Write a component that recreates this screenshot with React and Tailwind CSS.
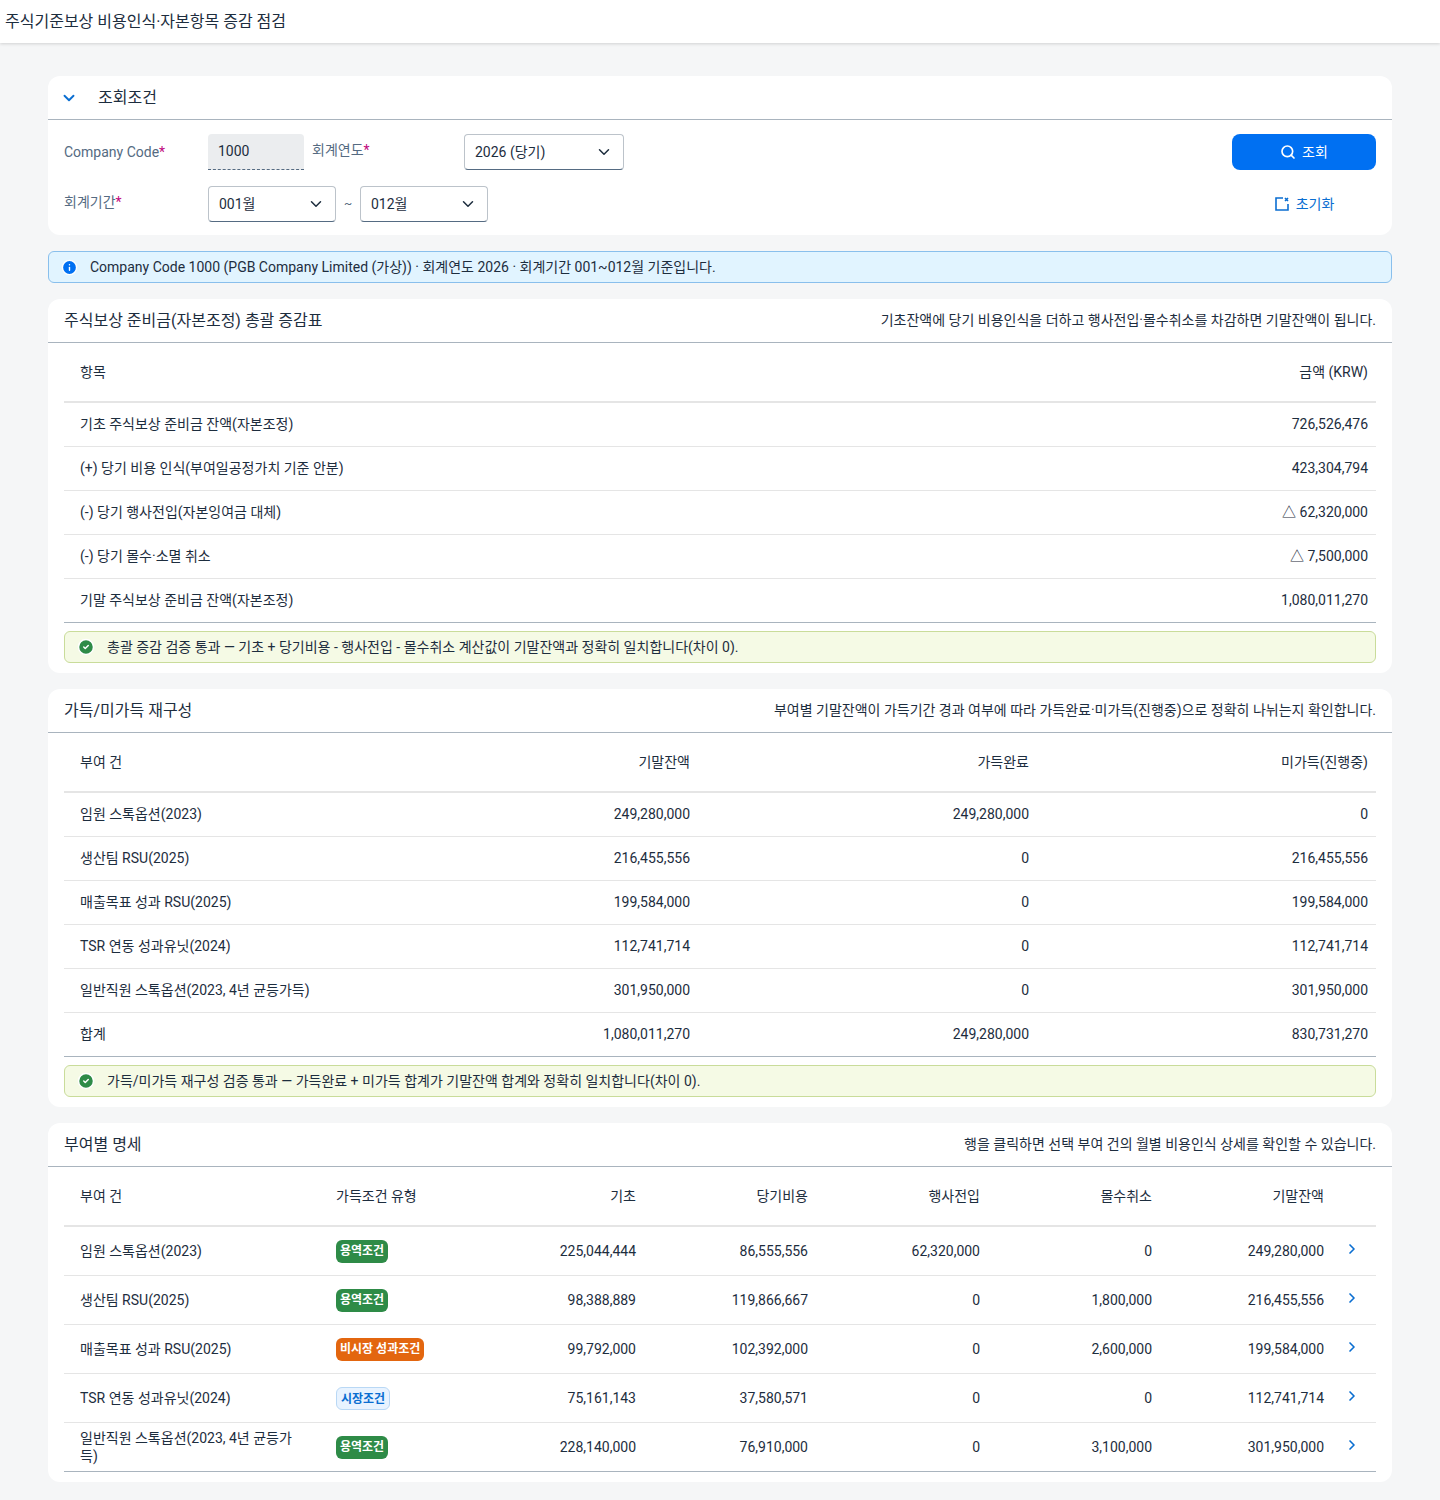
import React from "react";
import { ChevronDown, ChevronRight, Search, Info, CheckCircle2 } from "lucide-react";

const font = { fontFamily: 'Roboto, "Noto Sans CJK KR", sans-serif' };

const summary = [
  ["기초 주식보상 준비금 잔액(자본조정)", "726,526,476"],
  ["(+) 당기 비용 인식(부여일공정가치 기준 안분)", "423,304,794"],
  ["(-) 당기 행사전입(자본잉여금 대체)", "△ 62,320,000"],
  ["(-) 당기 몰수·소멸 취소", "△ 7,500,000"],
  ["기말 주식보상 준비금 잔액(자본조정)", "1,080,011,270"],
];

const vest = [
  ["임원 스톡옵션(2023)", "249,280,000", "249,280,000", "0"],
  ["생산팀 RSU(2025)", "216,455,556", "0", "216,455,556"],
  ["매출목표 성과 RSU(2025)", "199,584,000", "0", "199,584,000"],
  ["TSR 연동 성과유닛(2024)", "112,741,714", "0", "112,741,714"],
  ["일반직원 스톡옵션(2023, 4년 균등가득)", "301,950,000", "0", "301,950,000"],
  ["합계", "1,080,011,270", "249,280,000", "830,731,270"],
];

const grants = [
  ["임원 스톡옵션(2023)", "용역조건", "green", "225,044,444", "86,555,556", "62,320,000", "0", "249,280,000"],
  ["생산팀 RSU(2025)", "용역조건", "green", "98,388,889", "119,866,667", "0", "1,800,000", "216,455,556"],
  ["매출목표 성과 RSU(2025)", "비시장 성과조건", "orange", "99,792,000", "102,392,000", "0", "2,600,000", "199,584,000"],
  ["TSR 연동 성과유닛(2024)", "시장조건", "blue", "75,161,143", "37,580,571", "0", "0", "112,741,714"],
  ["일반직원 스톡옵션(2023, 4년 균등가득)", "용역조건", "green", "228,140,000", "76,910,000", "0", "3,100,000", "301,950,000"],
];

const badge = {
  green: "bg-[#2e8b47] text-white",
  orange: "bg-[#e3660f] text-white",
  blue: "bg-[#e8f3ff] text-[#0a6ed1] border border-[#b9d8f5]",
};

function CardHead({ title, note }) {
  return (
    <div className="flex items-center justify-between h-11 px-4 border-b border-[#a9b4be]">
      <span className="text-[16px] text-[#1d2d3e]">{title}</span>
      <span className="text-[14px] text-[#1d2d3e]">{note}</span>
    </div>
  );
}

function Passed({ children }) {
  return (
    <div className="mx-4 mt-2 h-8 flex items-center gap-3 px-3 rounded-md border border-[#c9dc9a] bg-[#f5fae5] text-[14px] text-[#1d2d3e]">
      <CheckCircle2 size={18} className="text-white fill-[#2e8b47]" />
      {children}
    </div>
  );
}

function Select({ value, w }) {
  return (
    <div className={`${w} h-9 flex items-center justify-between px-2.5 bg-white border border-[#bcc3ca] border-b-[#556b82] rounded text-[14px] text-[#1d2d3e]`}>
      {value}
      <ChevronDown size={18} strokeWidth={2} />
    </div>
  );
}

export default function App() {
  return (
    <div style={font} className="min-h-[1500px] bg-[#f5f6f7] text-[#1d2d3e]">
      <div className="h-[43px] bg-white shadow-[0_1px_3px_rgba(0,0,0,0.15)] flex items-center px-[5px] text-[16px]">
        주식기준보상 비용인식·자본항목 증감 점검
      </div>

      <div className="px-12 pt-[33px] pb-4 flex flex-col gap-4">
        <div className="bg-white rounded-xl">
          <div className="h-11 flex items-center gap-5 px-3 border-b border-[#a9b4be]">
            <ChevronDown size={18} className="text-[#0a6ed1]" strokeWidth={2.5} />
            <span className="text-[16px]">조회조건</span>
          </div>
          <div className="flex justify-between px-4 pt-[14px] pb-[13px]">
            <div className="flex flex-col gap-4">
              <div className="flex">
                <span className="w-[144px] pt-2 text-[14px] text-[#556b82]">Company Code<span className="text-[#c0087d]">*</span></span>
                <div className="w-[96px] h-9 flex items-center px-2.5 bg-[#ebedef] border-b border-dashed border-[#556b82] rounded-t text-[14px]">1000</div>
                <span className="w-[160px] pl-2 pt-1.5 text-[14px] text-[#556b82]">회계연도<span className="text-[#c0087d]">*</span></span>
                <Select value="2026 (당기)" w="w-[160px]" />
              </div>
              <div className="flex items-center">
                <span className="w-[144px] self-start pt-1.5 text-[14px] text-[#556b82]">회계기간<span className="text-[#c0087d]">*</span></span>
                <Select value="001월" w="w-[128px]" />
                <span className="w-6 text-center text-[12px] text-[#556b82]">~</span>
                <Select value="012월" w="w-[128px]" />
              </div>
            </div>
            <div className="flex flex-col items-center gap-4">
              <button className="w-[144px] h-9 rounded-lg bg-[#0070f2] text-white text-[14px] flex items-center justify-center gap-1.5">
                <Search size={16} strokeWidth={2.5} /> 조회
              </button>
              <button className="h-9 text-[#0a6ed1] text-[14px] flex items-center gap-1.5">
                <svg width="16" height="16" viewBox="0 0 16 16" fill="none" stroke="currentColor" strokeWidth="1.6">
                  <path d="M9 2H2v12h12V8" />
                  <path d="M11 2l3 3M14 2l-3 3" />
                </svg>
                초기화
              </button>
            </div>
          </div>
        </div>

        <div className="h-8 flex items-center gap-3 px-3 rounded-md border border-[#89bfec] bg-[#e1f4ff] text-[14px]">
          <Info size={17} className="text-white fill-[#0070f2]" />
          Company Code 1000 (PGB Company Limited (가상)) · 회계연도 2026 · 회계기간 001~012월 기준입니다.
        </div>

        <div className="bg-white rounded-xl pb-[10px]">
          <CardHead title="주식보상 준비금(자본조정) 총괄 증감표" note="기초잔액에 당기 비용인식을 더하고 행사전입·몰수취소를 차감하면 기말잔액이 됩니다." />
          <div className="mx-4 text-[14px]">
            <div className="h-[60px] flex items-center justify-between pl-4 pr-2 border-b-2 border-[#e5e5e5]">
              <span>항목</span><span>금액 (KRW)</span>
            </div>
            {summary.map(([a, b], i) => (
              <div key={i} className={`h-11 flex items-center justify-between pl-4 pr-2 border-b ${i === summary.length - 1 ? "border-[#a9b4be]" : "border-[#e5e5e5]"}`}>
                <span>{a}</span><span>{b}</span>
              </div>
            ))}
          </div>
          <Passed>총괄 증감 검증 통과 — 기초 + 당기비용 - 행사전입 - 몰수취소 계산값이 기말잔액과 정확히 일치합니다(차이 0).</Passed>
        </div>

        <div className="bg-white rounded-xl pb-[10px]">
          <CardHead title="가득/미가득 재구성" note="부여별 기말잔액이 가득기간 경과 여부에 따라 가득완료·미가득(진행중)으로 정확히 나뉘는지 확인합니다." />
          <div className="mx-4 text-[14px]">
            <div className="h-[60px] flex items-center border-b-2 border-[#e5e5e5]">
              <span className="flex-1 pl-4">부여 건</span>
              <span className="w-[340px] text-right pr-4">기말잔액</span>
              <span className="w-[339px] text-right pr-4">가득완료</span>
              <span className="w-[331px] text-right pr-2">미가득(진행중)</span>
            </div>
            {vest.map((r, i) => (
              <div key={i} className={`h-11 flex items-center border-b ${i === vest.length - 1 ? "border-[#a9b4be]" : "border-[#e5e5e5]"}`}>
                <span className="flex-1 pl-4">{r[0]}</span>
                <span className="w-[340px] text-right pr-4">{r[1]}</span>
                <span className="w-[339px] text-right pr-4">{r[2]}</span>
                <span className="w-[331px] text-right pr-2">{r[3]}</span>
              </div>
            ))}
          </div>
          <Passed>가득/미가득 재구성 검증 통과 — 가득완료 + 미가득 합계가 기말잔액 합계와 정확히 일치합니다(차이 0).</Passed>
        </div>

        <div className="bg-white rounded-xl pb-[10px]">
          <CardHead title="부여별 명세" note="행을 클릭하면 선택 부여 건의 월별 비용인식 상세를 확인할 수 있습니다." />
          <div className="mx-4 text-[14px]">
            <div className="h-[60px] flex items-center border-b-2 border-[#e5e5e5]">
              <span className="w-[256px] pl-4">부여 건</span>
              <span className="w-[160px] pl-4">가득조건 유형</span>
              <span className="w-[172px] text-right pr-4">기초</span>
              <span className="w-[172px] text-right pr-4">당기비용</span>
              <span className="w-[172px] text-right pr-4">행사전입</span>
              <span className="w-[172px] text-right pr-4">몰수취소</span>
              <span className="w-[172px] text-right pr-4">기말잔액</span>
              <span className="flex-1" />
            </div>
            {grants.map((r, i) => (
              <div key={i} className={`h-[49px] flex items-center border-b ${i === grants.length - 1 ? "border-[#a9b4be]" : "border-[#e5e5e5]"}`}>
                <span className="w-[256px] pl-4 pr-4 leading-[18px]">{r[0]}</span>
                <span className="w-[160px] pl-4">
                  <span className={`inline-block px-1 h-[23px] leading-[23px] rounded-md text-[12px] font-bold ${badge[r[2]]}`}>{r[1]}</span>
                </span>
                {r.slice(3).map((v, j) => (
                  <span key={j} className="w-[172px] text-right pr-4">{v}</span>
                ))}
                <span className="flex-1 flex justify-start pl-1">
                  <ChevronRight size={16} strokeWidth={2.5} className="text-[#0a6ed1] -mt-1" />
                </span>
              </div>
            ))}
          </div>
        </div>
      </div>
    </div>
  );
}
